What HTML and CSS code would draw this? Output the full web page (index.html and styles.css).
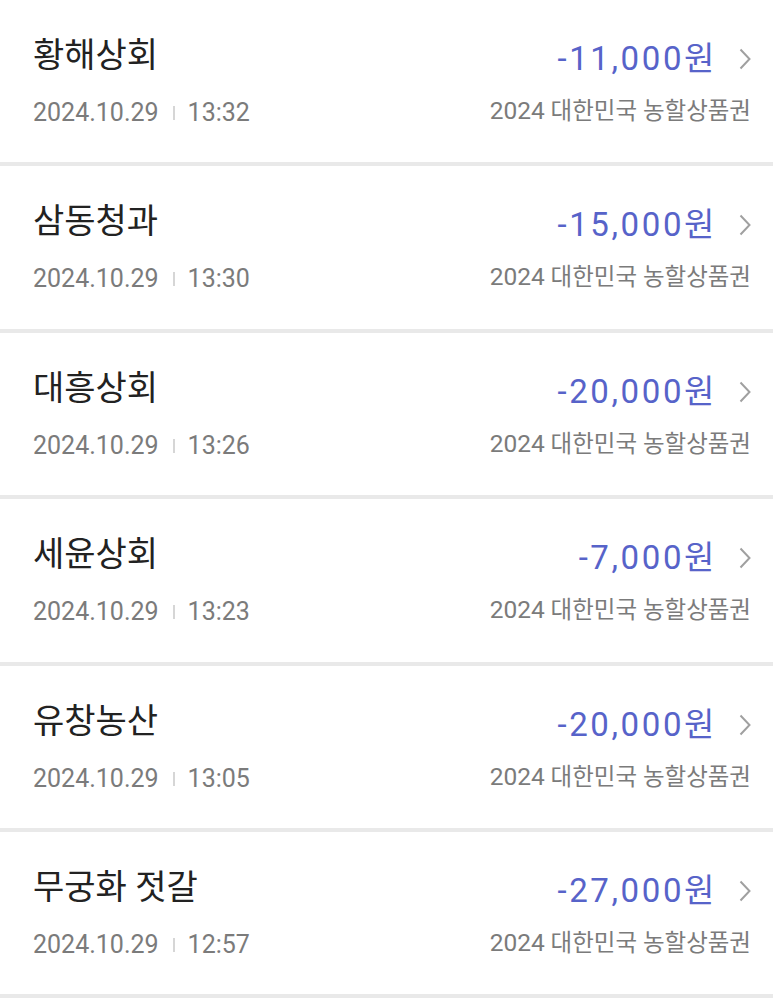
FILE: index.html
```html
<!DOCTYPE html>
<html lang="ko">
<head>
    <meta charset="UTF-8">
    <title>사용 내역</title>
    <link rel="stylesheet" href="styles.css">
</head>
<body>
    <ul class="history">
        <li class="item">
            <div class="left">
                <p class="store">황해상회</p>
                <p class="when">2024.10.29<span class="bar"></span>13:32</p>
            </div>
            <div class="right">
                <p class="amount">-11,000원<svg class="chevron" viewBox="0 0 12 22"><path d="M1.5 1.5 L10.5 11 L1.5 20.5"/></svg></p>
                <p class="voucher"><span class="year">2024</span> 대한민국 농할상품권</p>
            </div>
        </li>
        <li class="item">
            <div class="left">
                <p class="store">삼동청과</p>
                <p class="when">2024.10.29<span class="bar"></span>13:30</p>
            </div>
            <div class="right">
                <p class="amount">-15,000원<svg class="chevron" viewBox="0 0 12 22"><path d="M1.5 1.5 L10.5 11 L1.5 20.5"/></svg></p>
                <p class="voucher"><span class="year">2024</span> 대한민국 농할상품권</p>
            </div>
        </li>
        <li class="item">
            <div class="left">
                <p class="store">대흥상회</p>
                <p class="when">2024.10.29<span class="bar"></span>13:26</p>
            </div>
            <div class="right">
                <p class="amount">-20,000원<svg class="chevron" viewBox="0 0 12 22"><path d="M1.5 1.5 L10.5 11 L1.5 20.5"/></svg></p>
                <p class="voucher"><span class="year">2024</span> 대한민국 농할상품권</p>
            </div>
        </li>
        <li class="item">
            <div class="left">
                <p class="store">세윤상회</p>
                <p class="when">2024.10.29<span class="bar"></span>13:23</p>
            </div>
            <div class="right">
                <p class="amount">-7,000원<svg class="chevron" viewBox="0 0 12 22"><path d="M1.5 1.5 L10.5 11 L1.5 20.5"/></svg></p>
                <p class="voucher"><span class="year">2024</span> 대한민국 농할상품권</p>
            </div>
        </li>
        <li class="item">
            <div class="left">
                <p class="store">유창농산</p>
                <p class="when">2024.10.29<span class="bar"></span>13:05</p>
            </div>
            <div class="right">
                <p class="amount">-20,000원<svg class="chevron" viewBox="0 0 12 22"><path d="M1.5 1.5 L10.5 11 L1.5 20.5"/></svg></p>
                <p class="voucher"><span class="year">2024</span> 대한민국 농할상품권</p>
            </div>
        </li>
        <li class="item">
            <div class="left">
                <p class="store">무궁화 젓갈</p>
                <p class="when">2024.10.29<span class="bar"></span>12:57</p>
            </div>
            <div class="right">
                <p class="amount">-27,000원<svg class="chevron" viewBox="0 0 12 22"><path d="M1.5 1.5 L10.5 11 L1.5 20.5"/></svg></p>
                <p class="voucher"><span class="year">2024</span> 대한민국 농할상품권</p>
            </div>
        </li>
    </ul>
</body>
</html>
```

FILE: styles.css
```css
/* 기본 스타일 */
body {
    margin: 0;
    padding: 0;
    background-color: #ffffff;
    font-family: Roboto, 'Noto Sans CJK KR', sans-serif;
    overflow: hidden;
}
p {
    margin: 0;
}
/* 내역 목록 */
.history {
    list-style: none;
    margin: 0;
    padding: 0;
}
.item {
    box-sizing: border-box;
    height: 166.4px;
    display: flex;
    justify-content: space-between;
    padding: 33px 22px 0 33px;
    border-bottom: 4px solid #e9e9e9;
}
.left,
.right {
    display: flex;
    flex-direction: column;
}
.left {
    gap: 21px;
}
.right {
    align-items: flex-end;
    gap: 11px;
}
/* 가맹점 이름 */
.store {
    font-size: 34px;
    line-height: 44px;
    color: #222222;
}
/* 날짜와 시간 */
.when {
    font-size: 25px;
    line-height: 30px;
    color: #7b7b7b;
    display: flex;
    align-items: center;
}
.bar {
    width: 2px;
    height: 14px;
    margin: 0 13px 0 14px;
    background-color: #d6d6d6;
}
/* 금액 */
.amount {
    font-size: 33px;
    line-height: 52px;
    letter-spacing: 2.6px;
    color: #5763c9;
    display: flex;
    align-items: center;
}
.chevron {
    width: 12px;
    height: 22px;
    margin-left: 22px;
    fill: none;
    stroke: #a0a0a0;
    stroke-width: 2;
}
.voucher {
    font-size: 23.5px;
    line-height: 30px;
    color: #7b7b7b;
}
.year {
    font-size: 24.5px;
}
```
